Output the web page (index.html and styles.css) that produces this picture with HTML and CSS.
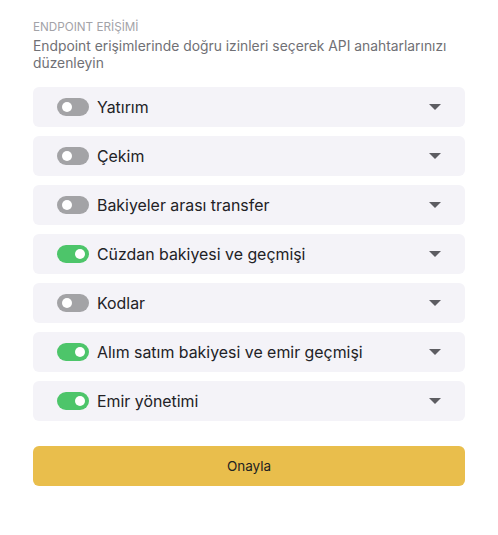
FILE: index.html
```html
<!DOCTYPE html>
<html lang="tr">
<head>
    <meta charset="UTF-8">
    <meta name="viewport" content="width=device-width, initial-scale=1.0">
    <title>Endpoint Erişimi</title>
    <link rel="stylesheet" href="styles.css">
</head>
<body>

<div class="container">
    <div class="section-title">ENDPOINT ERİŞİMİ</div>
    <p class="section-desc">Endpoint erişimlerinde doğru izinleri seçerek API anahtarlarınızı düzenleyin</p>

    <div class="list">
        <div class="row">
            <span class="toggle"></span>
            <span class="label">Yatırım</span>
            <span class="caret"></span>
        </div>
        <div class="row">
            <span class="toggle"></span>
            <span class="label">Çekim</span>
            <span class="caret"></span>
        </div>
        <div class="row">
            <span class="toggle"></span>
            <span class="label">Bakiyeler arası transfer</span>
            <span class="caret"></span>
        </div>
        <div class="row">
            <span class="toggle on"></span>
            <span class="label">Cüzdan bakiyesi ve geçmişi</span>
            <span class="caret"></span>
        </div>
        <div class="row">
            <span class="toggle"></span>
            <span class="label">Kodlar</span>
            <span class="caret"></span>
        </div>
        <div class="row">
            <span class="toggle on"></span>
            <span class="label">Alım satım bakiyesi ve emir geçmişi</span>
            <span class="caret"></span>
        </div>
        <div class="row">
            <span class="toggle on"></span>
            <span class="label">Emir yönetimi</span>
            <span class="caret"></span>
        </div>
    </div>

    <button class="btn">Onayla</button>
</div>

</body>
</html>
```

FILE: styles.css
```css
body {
    margin: 0;
    font-family: Inter, "Noto Sans", sans-serif;
    background-color: #fff;
}
.container {
    padding: 20px 33px 0 33px;
}
.section-title {
    font-size: 11.7px;
    color: #a3a3a8;
    line-height: 15px;
}
.section-desc {
    margin: 3px 0 0 0;
    font-size: 13.85px;
    line-height: 17px;
    color: #707075;
}
.list {
    margin-top: 15px;
    display: flex;
    flex-direction: column;
    gap: 9px;
}
.row {
    height: 40px;
    display: flex;
    align-items: center;
    padding: 0 24px;
    background-color: #f4f3f8;
    border-radius: 6px;
}
.toggle {
    position: relative;
    width: 32px;
    height: 18px;
    border-radius: 9px;
    background-color: #a3a3a6;
    flex-shrink: 0;
}
.toggle::after {
    content: "";
    position: absolute;
    top: 4px;
    left: 5px;
    width: 10px;
    height: 10px;
    border-radius: 50%;
    background-color: #fff;
}
.toggle.on {
    background-color: #4dc56a;
}
.toggle.on::after {
    left: 18px;
}
.label {
    margin-left: 8px;
    font-size: 15.9px;
    color: #222226;
    flex: 1;
}
.caret {
    width: 0;
    height: 0;
    border-left: 6px solid transparent;
    border-right: 6px solid transparent;
    border-top: 6px solid #5d5d62;
}
.btn {
    display: block;
    width: 100%;
    height: 40px;
    margin-top: 25px;
    background-color: #e9be4c;
    color: #222;
    border: none;
    border-radius: 6px;
    font-family: Inter, "Noto Sans", sans-serif;
    font-size: 13.5px;
    cursor: pointer;
}
```
